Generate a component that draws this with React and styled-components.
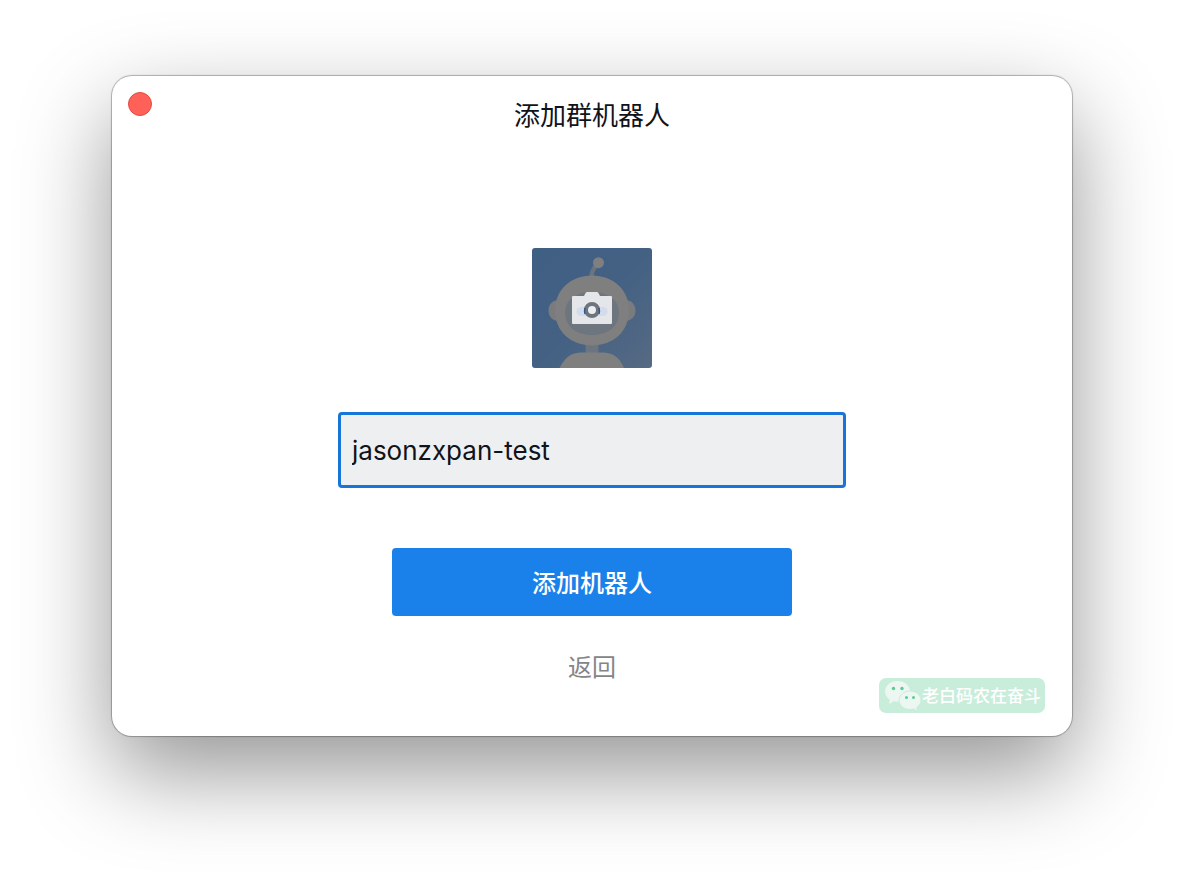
import React, { useState } from "react";
import styled, { createGlobalStyle } from "styled-components";

const GlobalStyle = createGlobalStyle`
  * { box-sizing: border-box; }
  body {
    margin: 0;
    background: #fff;
    color: #11131a;
    font-family: Inter, "Noto Sans CJK SC", sans-serif;
  }
`;

const Page = styled.main`
  min-height: 100vh;
  padding: 76px 112px 148px;
  display: flex;
  overflow: hidden;
`;

const Dialog = styled.section`
  position: relative;
  flex: 1;
  min-width: 0;
  display: flex;
  flex-direction: column;
  background: #fff;
  border-radius: 20px;
  box-shadow: 0 0 1px 1px rgba(0, 0, 0, 0.28), 0 36px 92px rgba(0, 0, 0, 0.42);
`;

const CloseButton = styled.button`
  position: absolute;
  top: 16px;
  left: 16px;
  width: 24px;
  height: 24px;
  padding: 0;
  border: 1px solid #e24b41;
  border-radius: 50%;
  background: #ff6159;
`;

const Title = styled.h1`
  margin: 22px 0 0;
  font-size: 26px;
  line-height: 36px;
  font-weight: 400;
  text-align: center;
`;

const Form = styled.form`
  display: flex;
  flex-direction: column;
  align-items: center;
  padding: 114px 24px 48px;
`;

const AvatarButton = styled.button`
  width: 120px;
  height: 120px;
  padding: 0;
  border: 0;
  border-radius: 3px;
  overflow: hidden;
  background: none;

  svg { display: block; }
`;

const NameInput = styled.input`
  width: 100%;
  max-width: 508px;
  height: 76px;
  margin: 44px 0 60px;
  padding: 0 11px;
  border: 3px solid #1775d9;
  border-radius: 4px;
  outline: 0;
  background: #eeeff1;
  color: inherit;
  font-family: inherit;
  font-size: 26px;
`;

const SubmitButton = styled.button`
  width: 100%;
  max-width: 400px;
  height: 68px;
  padding: 4px 0 0;
  border: 0;
  border-radius: 4px;
  background: #1b81ea;
  color: #fff;
  font-family: inherit;
  font-size: 24px;
  font-weight: 500;
  line-height: 36px;
`;

const BackButton = styled.button`
  margin-top: 34px;
  padding: 0;
  border: 0;
  background: none;
  color: #848588;
  font-family: inherit;
  font-size: 24px;
  line-height: 36px;
`;

const Watermark = styled.div`
  position: absolute;
  right: 27px;
  bottom: 23px;
  height: 35px;
  padding: 0 4px 0 5px;
  display: flex;
  align-items: center;
  gap: 1px;
  border-radius: 7px;
  background: #c9eddb;
  color: #fff;
  font-size: 17px;
  font-weight: 500;
  line-height: 24px;
`;

function RobotAvatar() {
  return (
    <svg width="120" height="120" viewBox="0 0 120 120" aria-hidden="true">
      <defs>
        <linearGradient id="sky" x1="0" y1="0" x2="1" y2="1">
          <stop offset="0" stopColor="#3f5f83" />
          <stop offset="0.5" stopColor="#446183" />
          <stop offset="1" stopColor="#566a83" />
        </linearGradient>
      </defs>
      <rect width="120" height="120" fill="url(#sky)" />
      <path d="M59.5 29c0-5 2-9 6-13" fill="none" stroke="#6b747d" strokeWidth="4.5" />
      <circle cx="66.5" cy="14.7" r="5.5" fill="#7f7f7f" />
      <rect x="53.5" y="95" width="13" height="12" fill="#6b747f" />
      <path d="M27.5 120C33 109.5 39 105 48 104.5h24c9 .5 15.5 5 20 15.5z" fill="#7f7f7f" />
      <path d="M27 52c-6 0-10.5 4-10.5 10.5S21 73 27 73zM93 52c6 0 10.5 4 10.5 10.5S99 73 93 73z" fill="#797b7e" />
      <path d="M60 27.5c21 0 37 14 37 35s-16 35-37 35-37-14-37-35 16-35 37-35z" fill="#7f7f7f" />
      <path d="M60 44c16 0 27 8 27 21S76 87 60 87 33 78 33 65s11-21 27-21z" fill="#6d757f" />
      <path d="M41 48h11l1.500-3q.5-1 2-1h9q1.500 0 2 1l1.500 3h11q1 0 1 1v26q0 1-1 1H41q-1 0-1-1V49q0-1 1-1z" fill="#e4e6e9" />
      <rect x="44.5" y="59" width="12" height="9" rx="4.5" fill="#d2dced" />
      <rect x="63.5" y="59" width="12" height="9" rx="4.5" fill="#d2dced" />
      <circle cx="60" cy="62" r="6" fill="#eceef0" stroke="#6d757f" strokeWidth="4" />
      <path d="M53 60q-1 3 0 6M67 60q1 3 0 6" fill="none" stroke="#345886" strokeWidth="1.4" />
    </svg>
  );
}

function ChatLogo() {
  return (
    <svg width="37" height="31" viewBox="0 0 37 31" aria-hidden="true">
      <path d="M13.5 1C6.5 1 1 5.5 1 11.5c0 3.400 1.800 6.200 4.700 8.200L5 24l4.800-2.700c1.200.3 2.400.4 3.700.4C20.5 21.700 26 17.200 26 11.5S20.5 1 13.5 1z" fill="#ebf7f0" />
      <path d="M26 11c-6 0-11 4-11 9.300s5 9.200 11 9.200c1.300 0 2.500-.2 3.600-.5l3.900 2-.8-3.500c2.600-1.700 4.300-4.300 4.300-7.200 0-5.300-5-9.300-11-9.300z" fill="#ebf7f0" stroke="#c9eddb" strokeWidth="1" />
      <g fill="#57ce93">
        <circle cx="9.5" cy="8.5" r="1.7" />
        <circle cx="18" cy="8.5" r="1.7" />
        <circle cx="22.5" cy="17.5" r="1.5" />
        <circle cx="29.5" cy="17.5" r="1.5" />
      </g>
    </svg>
  );
}

export default function App() {
  const [name, setName] = useState("jasonzxpan-test");
  return (
    <>
      <GlobalStyle />
      <Page>
        <Dialog role="dialog" aria-labelledby="dialog-title">
          <CloseButton type="button" aria-label="关闭" />
          <Title id="dialog-title">添加群机器人</Title>
          <Form onSubmit={(e) => e.preventDefault()}>
            <AvatarButton type="button" aria-label="更换头像">
              <RobotAvatar />
            </AvatarButton>
            <NameInput
              aria-label="机器人名称"
              spellCheck={false}
              value={name}
              onChange={(e) => setName(e.target.value)}
            />
            <SubmitButton type="submit">添加机器人</SubmitButton>
            <BackButton type="button">返回</BackButton>
          </Form>
          <Watermark>
            <ChatLogo />
            <span>老白码农在奋斗</span>
          </Watermark>
        </Dialog>
      </Page>
    </>
  );
}
